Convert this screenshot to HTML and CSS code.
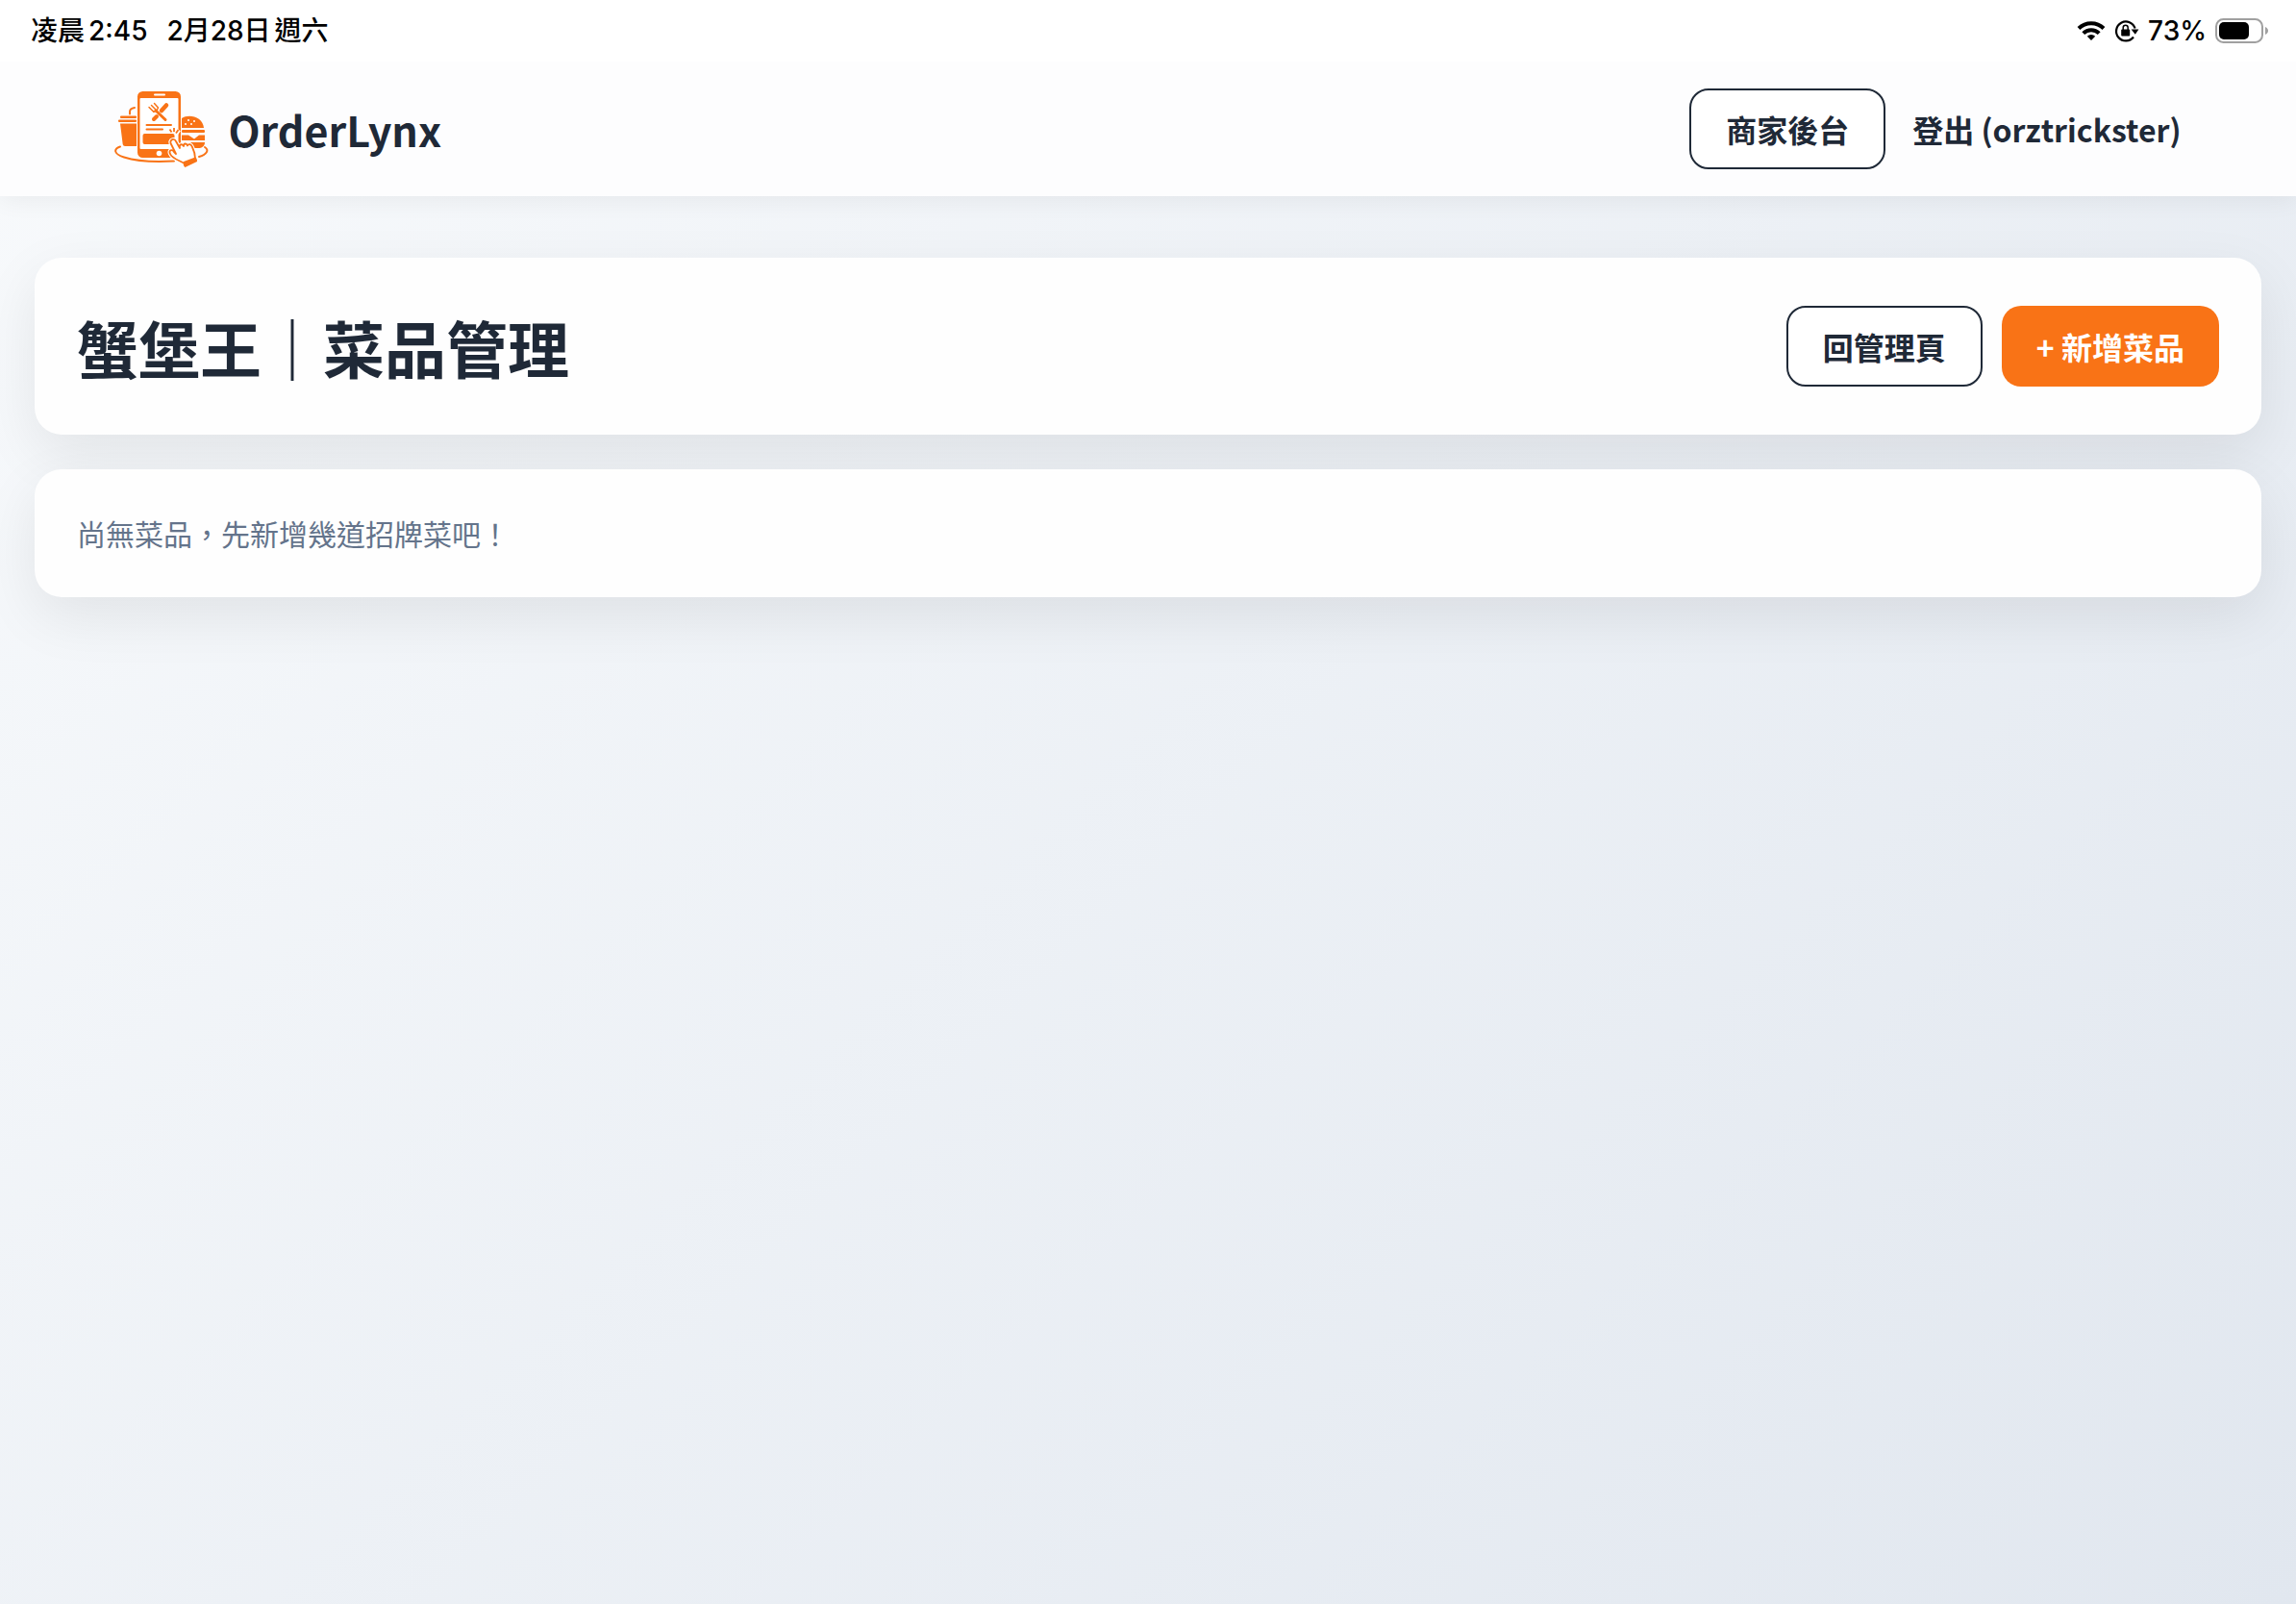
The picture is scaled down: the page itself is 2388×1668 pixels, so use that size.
FILE: index.html
```html
<!DOCTYPE html>
<html lang="zh-Hant">
<head>
<meta charset="UTF-8" />
<meta name="viewport" content="width=device-width, initial-scale=1" />
<title>菜品管理 - OrderLynx</title>
<link rel="stylesheet" href="styles.css">
</head>
<body>

  <div class="statusbar">
    <div class="status-left">
      <div class="status-group"><span>凌晨</span><span>2:45</span></div>
      <div class="status-group"><span>2月28日</span><span>週六</span></div>
    </div>
    <div class="status-right">
      <svg class="icon-wifi" viewBox="0 0 30 22" aria-hidden="true">
        <g fill="none" stroke="#000" stroke-width="4">
          <path d="M2 8.500a18.500 18.500 0 0 1 26 0" />
          <path d="M6.800 13.600a11.600 11.600 0 0 1 16.400 0" />
        </g>
        <path d="M15 21l-4.200-4.200a6 6 0 0 1 8.400 0z" />
      </svg>
      <svg class="icon-lock" viewBox="0 0 26 24" aria-hidden="true">
        <path d="M20 18.500A10 10 0 1 1 21.600 9.500" fill="none" stroke="#000" stroke-width="2.200" />
        <path d="M17.600 10.500h7.800l-3.600 5.200z" />
        <rect x="7.200" y="10.600" width="9" height="6.800" rx="1" />
        <path d="M9.200 11V8.800a2.500 2.500 0 0 1 5 0V11" fill="none" stroke="#000" stroke-width="1.500" />
      </svg>
      <span>73%</span>
      <svg class="icon-battery" viewBox="0 0 56 26" aria-hidden="true">
        <rect x="1" y="1" width="48" height="24" rx="7.500" fill="none" stroke="#a0a0a0" stroke-width="2" />
        <rect x="4" y="4" width="31" height="18" rx="5" />
        <path d="M52 9c4 1.500 4 6.500 0 8z" fill="#a0a0a0" />
      </svg>
    </div>
  </div>

  <header class="navbar">
    <a class="brand" href="#">
      <svg class="brand-logo" viewBox="0 0 98 80" aria-hidden="true">
        <g fill="none" stroke="#f97316" stroke-width="2" stroke-linecap="round">
          <!-- plate -->
          <path d="M6 58.500C-1 61 -1 66 10 69.500C24 74 44 74.500 62 73.500" />
          <path d="M94 59C99 62 96 66.500 88 69" />
          <!-- straw -->
          <path d="M16 24.500V22C16 19 18 18.500 21 18" />
        </g>
        <!-- cup -->
        <rect x="6" y="26.500" width="17" height="2.500" rx="1" fill="#f97316" />
        <rect x="4" y="30.500" width="19" height="2.500" rx="1" fill="#f97316" />
        <path d="M6 34.500H23V58H11Q9 58 8.700 56z" fill="#f97316" />
        <!-- phone -->
        <rect x="24" y="1" width="45" height="69" rx="5.500" fill="#f97316" />
        <rect x="26.500" y="8" width="40" height="53" rx="1" fill="#fff" />
        <rect x="41" y="3.500" width="12" height="2" rx="1" fill="#fff" />
        <circle cx="46.500" cy="65.500" r="2.800" fill="#fff" />
        <!-- fork and knife -->
        <g stroke="#f97316" stroke-linecap="round" fill="none">
          <path d="M54 15.500L49 21" stroke-width="4.500" />
          <path d="M44 27L41 30" stroke-width="4" />
          <path d="M43 21L53 30.500" stroke-width="3" />
          <path d="M36 17.500L41 22.500M38.500 15.500L43 20M41.500 13.500L45.500 18M40 21.500L43.500 22L45.500 18" stroke-width="1.500" />
        </g>
        <path d="M33.500 36H59M33.500 40.500H50" stroke="#f97316" stroke-width="2" stroke-linecap="round" />
        <rect x="29.500" y="45" width="33" height="11" rx="2" fill="#f97316" />
        <!-- burger -->
        <path d="M70 39V29C77 24 92 27 93 39z" fill="#f97316" />
        <g fill="#fff">
          <circle cx="77" cy="31" r="1" /><circle cx="83" cy="32" r="1" />
          <circle cx="74" cy="35" r="1" /><circle cx="80" cy="35" r="1" />
        </g>
        <rect x="70" y="41" width="24" height="3" rx="1" fill="#f97316" />
        <path d="M70 46.500H77L83 50.500L88 46.500H94V52H70z" fill="#f97316" />
        <path d="M79 54H94C94 58 91 60 87 60H82z" fill="#f97316" />
        <!-- tap marks and hand -->
        <path d="M57.500 40.500L59.500 43.500M62 39V43M67 41L64.500 44.500" stroke="#fff" stroke-width="4.500" />
        <path d="M57.500 40.500L59.500 43.500M62 39V43M66.500 41L64 44.500" stroke="#f97316" stroke-width="1.800" />
        <path d="M59 52C61 50 63 51 64 53L68 60C67 56 70 55 72 58C72 55 75 54.500 76 57.500C77 55 80 56 81 59C83 63 84 67 84 71L73 76C68 73 60 71 58 66C56 62 60 61 62 64L64 66L58.500 55Q58 53 59 52z" fill="#fff" stroke="#fff" stroke-width="4" />
        <path d="M59 52C61 50 63 51 64 53L68 60C67 56 70 55 72 58C72 55 75 54.500 76 57.500C77 55 80 56 81 59C83 63 84 67 84 71L73 76C68 73 60 71 58 66C56 62 60 61 62 64L64 66L58.500 55Q58 53 59 52z" fill="#fff" stroke="#f97316" stroke-width="1.800" stroke-linejoin="round" />
        <path d="M72 74L84 69.500Q86 70 86 74L73.500 80Q71 78 72 74z" fill="#f97316" />
      </svg>
      <span class="brand-name">OrderLynx</span>
    </a>
    <nav class="nav-links">
      <a class="btn btn-outline" href="#">商家後台</a>
      <a class="nav-link" href="#">登出 (orztrickster)</a>
    </nav>
  </header>

  <main class="container">
    <section class="card page-header">
      <h1 class="page-title">蟹堡王｜菜品管理</h1>
      <div class="actions">
        <a class="btn btn-outline" href="#">回管理頁</a>
        <a class="btn btn-primary" href="#">+ 新增菜品</a>
      </div>
    </section>

    <section class="card">
      <p class="muted">尚無菜品，先新增幾道招牌菜吧！</p>
    </section>
  </main>

</body>
</html>
```

FILE: styles.css
```css
* {
  box-sizing: border-box;
}

body {
  margin: 0;
  min-height: 100vh;
  font-family: "Noto Sans CJK TC", "Noto Sans", sans-serif;
  font-size: 32px;
  line-height: 1.5;
  color: #1f2937;
  background: linear-gradient(135deg, #f8fafc 0%, #e1e7ef 100%);
}

a {
  color: inherit;
  text-decoration: none;
}

/* STATUS BAR */
.statusbar {
  position: relative;
  z-index: 1;
  display: flex;
  align-items: center;
  justify-content: space-between;
  height: 64px;
  padding: 0 28px 0 32px;
  background: #fff;
  color: #000;
  font-family: Inter, "Noto Sans CJK TC", sans-serif;
  font-size: 28px;
  font-weight: 500;
}

.status-left {
  display: flex;
  gap: 20px;
}

.status-group {
  display: flex;
  gap: 4px;
}

.status-right {
  display: flex;
  align-items: center;
  gap: 9px;
}

.icon-wifi {
  width: 30px;
  height: 22px;
}

.icon-lock {
  width: 26px;
  height: 24px;
}

.icon-battery {
  width: 56px;
  height: 26px;
}

/* NAVBAR */
.navbar {
  display: flex;
  align-items: center;
  justify-content: space-between;
  padding: 28px 5%;
  background: #fdfdfe;
  box-shadow: 0 4px 24px rgba(0, 0, 0, 0.06);
}

.brand {
  display: flex;
  align-items: center;
  gap: 20px;
}

.brand-logo {
  width: 98px;
  height: 80px;
}

.brand-name {
  font-size: 43px;
  font-weight: 700;
}

.nav-links {
  display: flex;
  align-items: center;
  gap: 28px;
}

.nav-link {
  font-weight: 700;
}

/* BUTTONS */
.btn {
  padding: 18px 36px;
  border-radius: 20px;
  font-weight: 700;
}

.btn-outline {
  padding: 16px 36px;
  border: 2px solid #1f2937;
  background: #fff;
}

.btn-primary {
  background: #f97316;
  color: #fff;
}

/* CONTENT */
.container {
  display: flex;
  flex-direction: column;
  gap: 36px;
  padding: 64px 36px;
}

.card {
  padding: 44px;
  border-radius: 28px;
  background: #fefefe;
  box-shadow: 0 20px 60px rgba(0, 0, 0, 0.08);
}

.page-header {
  display: flex;
  align-items: center;
  justify-content: space-between;
}

.page-title {
  margin: 0;
  font-size: 64px;
  font-weight: 700;
}

.actions {
  display: flex;
  gap: 20px;
}

.muted {
  margin: 0;
  font-size: 30px;
  color: #64748b;
}
```
